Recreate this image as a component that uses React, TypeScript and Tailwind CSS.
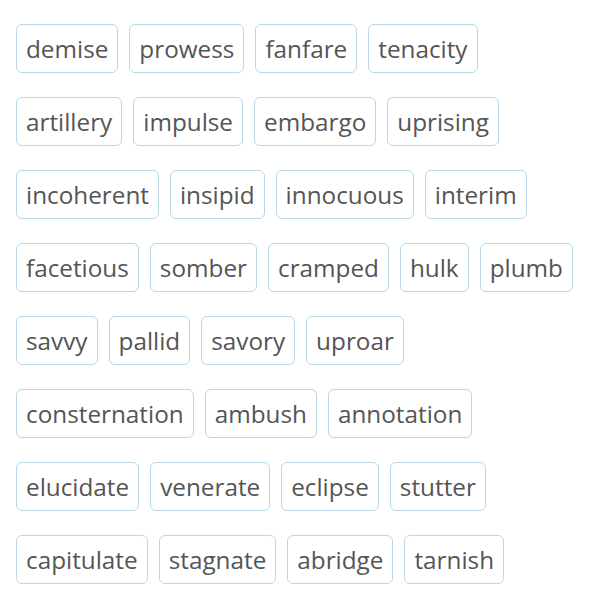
const rows = [
  ["demise", "prowess", "fanfare", "tenacity"],
  ["artillery", "impulse", "embargo", "uprising"],
  ["incoherent", "insipid", "innocuous", "interim"],
  ["facetious", "somber", "cramped", "hulk", "plumb"],
  ["savvy", "pallid", "savory", "uproar"],
  ["consternation", "ambush", "annotation"],
  ["elucidate", "venerate", "eclipse", "stutter"],
  ["capitulate", "stagnate", "abridge", "tarnish"],
]

export default function App() {
  return (
    <div className="flex min-h-[600px] flex-col gap-[24px] bg-white pl-[16px] pt-[24px] font-['Open_Sans',sans-serif]">
      {rows.map((row, i) => (
        <div key={i} className="flex gap-[11px]">
          {row.map((word) => (
            <span
              key={word}
              className="rounded-[6px] border border-[#b9d7e5] px-[9px] py-[8px] text-[24.3px] leading-[31px] text-[#555555]"
            >
              {word}
            </span>
          ))}
        </div>
      ))}
    </div>
  )
}
